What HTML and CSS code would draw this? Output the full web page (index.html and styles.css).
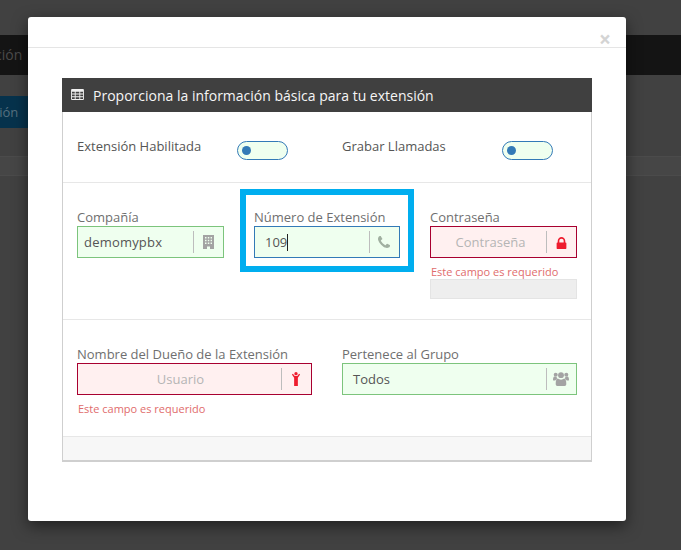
FILE: index.html
```html
<!DOCTYPE html>
<html lang="es">
<head>
<meta charset="utf-8">
<title>Extensión</title>
<link rel="stylesheet" href="styles.css">
</head>
<body>
<div class="page">
  <div class="topbar"><span>ción</span></div>
  <div class="blue-btn"><span>ción</span></div>
  <div class="strip"></div>
</div>
<div class="modal">
  <div class="modal-head"><span class="close">×</span></div>
  <div class="modal-body">
    <section class="panel">
      <h2 class="panel-head">
        <svg class="i-table" viewBox="0 0 14 12"><path fill-rule="evenodd" d="M1 0h12a1 1 0 0 1 1 1v10a1 1 0 0 1-1 1H1a1 1 0 0 1-1-1V1a1 1 0 0 1 1-1zM1 3v2h3V3zm4 0v2h4V3zm5 0v2h3V3zM1 6v2h3V6zm4 0v2h4V6zm5 0v2h3V6zM1 9v2h3V9zm4 0v2h4V9zm5 0v2h3V9z"/></svg>
        <span>Proporciona la información básica para tu extensión</span>
      </h2>
      <div class="row toggles">
        <div class="toggle-cell"><label class="t-label">Extensión Habilitada</label><span class="toggle"><i></i></span></div>
        <div class="toggle-cell"><label class="t-label">Grabar Llamadas</label><span class="toggle"><i></i></span></div>
      </div>
      <div class="row three">
        <div class="field">
          <label>Compañía</label>
          <div class="input ok left"><span>demomypbx</span><b class="sep"></b>
            <svg class="ic building" viewBox="0 0 11 14"><path fill="#a3a3a3" fill-rule="evenodd" d="M0 0h11v14H7v-2.500H4V14H0zM2 2v1.500h1.500V2zm2.800 0v1.500h1.500V2zm2.800 0v1.500H9V2zM2 4.700v1.500h1.500V4.700zm2.800 0v1.500h1.500V4.700zm2.800 0v1.500H9V4.700zM2 7.400v1.500h1.500V7.400zm2.800 0v1.500h1.500V7.400zm2.800 0v1.500H9V7.400z"/></svg>
          </div>
        </div>
        <div class="field focus-box">
          <label>Número de Extensión</label>
          <div class="input focus pad"><span class="typed">109</span><b class="sep"></b>
            <svg class="ic phone" viewBox="0 0 1408 1408"><path fill="#a0b0a0" d="M1408 1112q0 27-10 70.500t-21 68.500q-21 50-122 106-94 51-186 51-27 0-53-3.500t-57.500-12.500-47-14.500-55.500-20.500-49-18q-98-35-175-83-127-79-264-216t-216-264q-48-77-83-175-3-9-18-49t-20.500-55.500-14.500-47-12.500-57.500-3.500-53q0-92 51-186 56-101 106-122 25-11 68.500-21t70.500-10q14 0 21 3 18 6 53 76 11 19 30 54t35 63.500 31 53.500q3 4 17.500 25t21.500 35.500 7 28.500q0 20-28.500 50t-62 55-62 53-28.500 46q0 9 5 22.500t8.500 20.500 14 24 11.500 19q76 137 174 235t235 174q2 1 19 11.500t24 14 20.500 8.500 22.500 5q18 0 46-28.500t53-62 55-62 50-28.500q14 0 28.500 7t35.500 21.500 25 17.500q25 15 53.500 31t63.500 35 54 30q70 35 76 53 3 7 3 21z"/></svg>
          </div>
        </div>
        <div class="field">
          <label>Contraseña</label>
          <div class="input bad center shift"><span>Contraseña</span><b class="sep"></b>
            <svg class="ic lock" viewBox="0 0 1152 1536"><path fill="#ee1c2e" d="M320 768h512v-192q0-106-75-181t-181-75-181 75-75 181v192zm832 96v576q0 40-28 68t-68 28h-960q-40 0-68-28t-28-68v-576q0-40 28-68t68-28h32v-192q0-184 132-316t316-132 316 132 132 316v192h32q40 0 68 28t28 68z"/></svg>
          </div>
          <p class="err">Este campo es requerido</p>
          <div class="strength"></div>
        </div>
      </div>
      <div class="row two">
        <div class="field">
          <label>Nombre del Dueño de la Extensión</label>
          <div class="input bad center"><span>Usuario</span><b class="sep"></b>
            <svg class="ic child" viewBox="0 0 10 15"><path fill="#ee1c2e" d="M5 0a1.800 1.800 0 1 1 0 3.600A1.800 1.800 0 0 1 5 0zM.6 2.800l1.100-1L3.600 4.200h2.800l1.900-2.400 1.100 1L7 6.200V15H3V6.200z"/></svg>
          </div>
          <p class="err">Este campo es requerido</p>
        </div>
        <div class="field">
          <label>Pertenece al Grupo</label>
          <div class="input ok pad"><span>Todos</span><b class="sep"></b>
            <svg class="ic users" viewBox="0 0 16 14"><g fill="#a3a3a3"><circle cx="2.700" cy="2.800" r="2"/><circle cx="13.300" cy="2.800" r="2"/><circle cx="8" cy="3.200" r="2.900"/><path d="M0 8c0-2 .6-3.400 1.500-3.400.6.400 1.400.6 2.300.4-.2.800 0 1.400.3 2C3 7.300 2.500 8 2.300 8.600H1C.4 8.600 0 8.400 0 8zM16 8c0-2-.6-3.400-1.500-3.400-.6.400-1.400.6-2.300.4.2.800 0 1.400-.3 2 1.100.300 1.600 1 1.800 1.600H15c.6 0 1-.2 1-.6zM5 6.600c.7.700 1.800 1.100 3 1.100s2.300-.4 3-1.100c1.500 0 2.300 1.900 2.300 5.400 0 1.300-.6 2-1.700 2H4.400c-1.100 0-1.700-.7-1.700-2 0-3.500.8-5.400 2.300-5.400z"/></g></svg>
          </div>
        </div>
      </div>
      <div class="panel-foot"></div>
    </section>
  </div>
</div>
</body>
</html>
```
FILE: styles.css
```css
* { box-sizing: border-box; }
html, body { margin: 0; height: 100%; }
body {
  background: #414141;
  font-family: "Open Sans", sans-serif;
  font-size: 13px;
  color: #555;
  overflow: hidden;
  position: relative;
}
.page { padding-top: 35px; color: #4a4a4a; }
.topbar {
  height: 40px;
  background: #141414;
  line-height: 40px;
  font-size: 14px;
  color: #4b4b4b;
  text-indent: -5px;
}
.blue-btn {
  margin-top: 21px;
  width: 30px;
  height: 32px;
  background: #06324c;
  line-height: 32px;
  font-size: 13px;
  color: #56707f;
  text-indent: -7px;
  overflow: hidden;
}
.strip {
  margin-top: 28px;
  height: 20px;
  border-top: 1px solid #4b4b4b;
  border-bottom: 1px solid #4b4b4b;
  background: #464646;
}
.modal {
  position: absolute;
  left: 28px;
  top: 17px;
  width: 598px;
  height: 504px;
  background: #fff;
  border-radius: 3px;
  box-shadow: 0 5px 15px rgba(0, 0, 0, .5);
}
.modal-head {
  height: 31px;
  border-bottom: 1px solid #e5e5e5;
  position: relative;
}
.close {
  position: absolute;
  right: 15px;
  top: 12px;
  font-size: 21px;
  line-height: 1;
  font-weight: 700;
  color: #d4d4d4;
}
.modal-body { padding: 30px 34px 0; }
.panel {
  width: 530px;
  border: 1px solid #cfcfcf;
  border-top: 0;
  border-bottom-width: 2px;
}
.panel-head {
  margin: 0 -1px;
  height: 34px;
  background: #404040;
  color: #f5f5f5;
  font-size: 14px;
  font-weight: 400;
  display: flex;
  align-items: center;
  padding-left: 9px;
  gap: 9px;
}
.i-table { width: 13px; height: 11px; fill: #f0f0f0; margin-top: -2px; flex: none; }
.row { border-bottom: 1px solid #e7e7e7; display: grid; padding-left: 14px; column-gap: 30px; align-items: start; }
.toggles { height: 71px; grid-template-columns: 235px 235px; padding-top: 28px; }
.toggle-cell { position: relative; }
.t-label { font-size: 13px; color: #555; line-height: 13px; display: block; }
.toggle {
  position: absolute;
  left: 160px;
  top: 1px;
  width: 51px;
  height: 19px;
  border: 1px solid #337ab7;
  border-radius: 10px;
  background: #efffef;
}
.toggle i {
  position: absolute;
  left: 4px;
  top: 4px;
  width: 9px;
  height: 9px;
  border-radius: 50%;
  background: #337ab7;
}
.three { height: 137px; grid-template-columns: 147px 146px 147px; padding-top: 20px; }
.two { height: 117px; grid-template-columns: 235px 235px; padding-top: 20px; }
.panel-foot { height: 23px; background: #f7f7f7; }
.field { min-width: 0; }
.field label { display: block; color: #6f6f6f; line-height: 28px; height: 23px; }
.input {
  height: 32px;
  display: flex;
  align-items: center;
  border: 1px solid;
  font-size: 13px;
}
.input span { flex: 1; min-width: 0; }
.ok { background: #efffef; border-color: #7cc47c; color: #555; }
.focus { background: #efffef; border-color: #337ab7; color: #555; }
.bad { background: #fff0f0; border-color: #a80030; color: #b5b5b5; }
.left span { padding-left: 6px; letter-spacing: .2px; }
.pad span { padding-left: 10px; }
.center span { text-align: center; padding-left: 2px; }
.shift span { padding-left: 4px; }
.typed::after {
  content: "";
  display: inline-block;
  width: 1px;
  height: 17px;
  background: #222;
  vertical-align: -4px;
}
.sep { width: 1px; height: 22px; background: #bdbdbd; flex: none; }
.ic { flex: none; display: block; margin: 0 9px; width: 12px; height: 14px; }
.building { width: 11px; }
.lock { width: 11px; height: 13px; }
.phone { width: 12px; height: 12px; margin: 0 9px 0 8px; }
.child { width: 10px; height: 14px; margin: 0 10px 0 9px; }
.users { width: 16px; height: 14px; margin: 0 7px 0 6px; }
.err { margin: 5px 0 0 1px; font-size: 11px; line-height: 17px; color: #df6c6c; }
.strength { margin-top: -1px; height: 20px; background: #eee; border: 1px solid #e4e4e4; }
.focus-box {
  outline: 6px solid #00aeef;
  outline-offset: 8px;
  height: 55px;
}
```
